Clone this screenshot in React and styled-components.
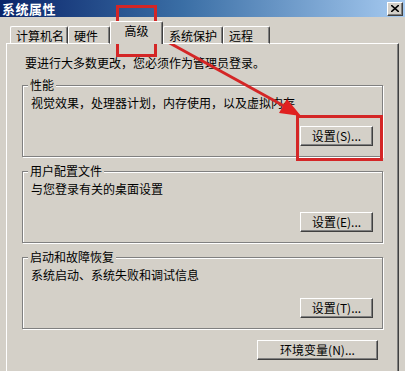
import React from 'react'
import styled, { createGlobalStyle } from 'styled-components'

const Global = createGlobalStyle`
  html, body { margin: 0; padding: 0; }
  body {
    background: #d4d0c8;
    font-family: "Noto Sans CJK SC", "Liberation Sans", sans-serif;
    font-size: 12px;
    color: #000;
  }
`;

const Win = styled.div`
  position: relative;
  width: 405px;
  height: 371px;
  overflow: hidden;
  background: #d4d0c8;
`;

const TitleBar = styled.div`
  height: 17px;
  display: flex;
  align-items: center;
  justify-content: space-between;
  padding: 0 2px 0 2px;
  background: linear-gradient(90deg, #0a246a 0%, #3a6ea5 45%, #a6caf0 100%);
`;

const Title = styled.div`
  color: #fff;
  font-weight: 700;
  font-size: 13px;
  line-height: 15px;
  letter-spacing: 0.5px;
`;

const CloseBtn = styled.div`
  width: 14px;
  height: 12px;
  display: flex;
  align-items: center;
  justify-content: center;
  background: #d4d0c8;
  border: 1px solid;
  border-color: #fff #404040 #404040 #fff;
  box-shadow: inset -1px -1px #808080;
`;

const Body = styled.div`
  padding: 5px 0 0 6px;
`;

const TabStrip = styled.div`
  display: flex;
  align-items: flex-end;
  height: 22px;
  padding-left: 4px;
  position: relative;
  z-index: 1;
  margin-bottom: -1px;
`;

const Tab = styled.div`
  box-sizing: border-box;
  width: ${p => p.$w}px;
  height: ${p => (p.$on ? 23 : 18)}px;
  padding: ${p => (p.$on ? '1px 0 0 0' : '1px 0 0 5px')};
  text-align: ${p => (p.$on ? 'center' : 'left')};
  line-height: 15px;
  background: #d4d0c8;
  border-top: 1px solid #fff;
  border-left: 1px solid #fff;
  border-right: 1px solid #404040;
  border-radius: 2px 2px 0 0;
  box-shadow: inset -1px 0 #808080;
  border-bottom: ${p => (p.$on ? 'none' : '1px solid #fff')};
  white-space: nowrap;
`;

const Panel = styled.div`
  box-sizing: border-box;
  width: 393px;
  height: 330px;
  padding: 12px 15px 0 15px;
  border-top: 1px solid #fff;
  border-left: 1px solid #fff;
  border-right: 1px solid #404040;
  box-shadow: inset -1px 0 #808080;
`;

const Note = styled.div`
  line-height: 14px;
  padding-left: 3px;
  margin-bottom: 8px;
`;

const Group = styled.fieldset`
  margin: 0 0 ${p => p.$gap}px 0;
  padding: 4px 9px 10px 8px;
  min-width: 0;
  border: 1px solid #808080;
  box-shadow: 1px 1px 0 #fff, inset 1px 1px 0 #fff;
`;

const Legend = styled.legend`
  padding: 0 2px;
  margin-left: -3px;
  line-height: 14px;
  background: #d4d0c8;
`;

const Desc = styled.div`
  line-height: 14px;
  margin-bottom: ${p => p.$gap}px;
`;

const BtnRow = styled.div`
  display: flex;
  justify-content: flex-end;
  padding-right: ${p => p.$pr || 0}px;
`;

const Button = styled.div`
  box-sizing: border-box;
  width: ${p => p.$w}px;
  height: 20px;
  display: flex;
  align-items: center;
  justify-content: center;
  background: #d4d0c8;
  border: 1px solid;
  border-color: #fff #404040 #404040 #fff;
  box-shadow: inset -1px -1px #808080;
  font-size: 12px;
  line-height: 14px;
  white-space: nowrap;
`;

const Marks = styled.svg`
  position: absolute;
  left: 0;
  top: 0;
  pointer-events: none;
`;

const tabs = [
  { label: '计算机名', w: 58 },
  { label: '硬件', w: 42 },
  { label: '高级', w: 53, on: true },
  { label: '系统保护', w: 60 },
  { label: '远程', w: 47 },
];

const groups = [
  { legend: '性能', desc: '视觉效果，处理器计划，内存使用，以及虚拟内存', btn: '设置(S)...', gap: 7, dgap: 16 },
  { legend: '用户配置文件', desc: '与您登录有关的桌面设置', btn: '设置(E)...', gap: 7, dgap: 16 },
  { legend: '启动和故障恢复', desc: '系统启动、系统失败和调试信息', btn: '设置(T)...', gap: 11, dgap: 16 },
];

export default function App() {
  return (
    <Win>
      <Global />
      <TitleBar>
        <Title>系统属性</Title>
        <CloseBtn>
          <svg width="8" height="7" viewBox="0 0 8 7">
            <path d="M0 0L8 7M8 0L0 7" stroke="#000" strokeWidth="1.6" />
          </svg>
        </CloseBtn>
      </TitleBar>
      <Body>
        <TabStrip>
          {tabs.map(t => (
            <Tab key={t.label} $w={t.w} $on={t.on}>{t.label}</Tab>
          ))}
        </TabStrip>
        <Panel>
          <Note>要进行大多数更改，您必须作为管理员登录。</Note>
          {groups.map(g => (
            <Group key={g.legend} $gap={g.gap}>
              <Legend>{g.legend}</Legend>
              <Desc $gap={g.dgap}>{g.desc}</Desc>
              <BtnRow>
                <Button $w={73}>{g.btn}</Button>
              </BtnRow>
            </Group>
          ))}
          <BtnRow $pr={5}>
            <Button $w={121}>环境变量(N)...</Button>
          </BtnRow>
        </Panel>
      </Body>
      <Marks width="405" height="371" viewBox="0 0 405 371">
        <rect x="117.5" y="6.5" width="38" height="49" fill="none" stroke="#d42626" strokeWidth="3" />
        <rect x="297.5" y="116.5" width="84" height="43" fill="none" stroke="#d42626" strokeWidth="3" />
        <line x1="166" y1="41" x2="284" y2="106" stroke="#d42626" strokeWidth="3" />
        <polygon points="301,116 279,113 287,99" fill="#e02020" />
      </Marks>
    </Win>
  )
}
